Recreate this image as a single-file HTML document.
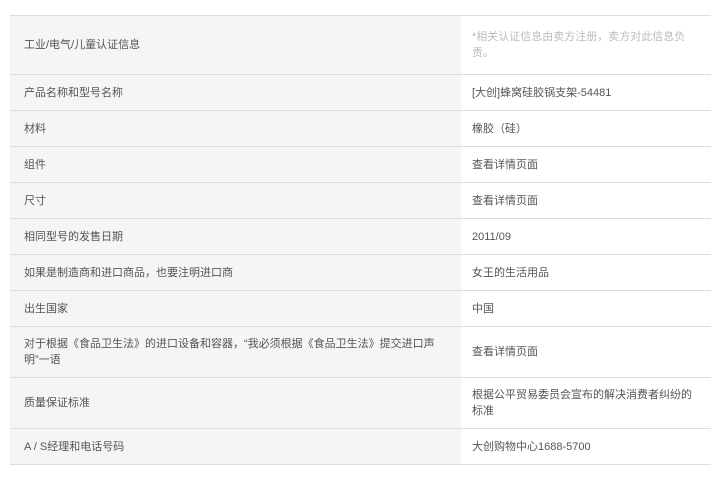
<!DOCTYPE html>
<html><head><meta charset="utf-8"><style>
body{margin:0;background:#fff;width:721px;height:499px;overflow:hidden;font-family:"Liberation Sans","Noto Sans CJK SC",sans-serif;font-size:11px;color:#555;}
table{position:absolute;left:10px;top:15px;width:701px;border-collapse:collapse;}
td{border-top:1px solid #ddd;border-bottom:1px solid #ddd;padding:0 14px;line-height:16px;vertical-align:middle;}
td.l{background:#f5f5f5;width:423px;}
td.r{padding-left:11px;padding-right:8px;}
.g{color:#bbb;}
</style></head><body>
<table>
<tr style="height:59px"><td class="l">工业/电气/儿童认证信息</td><td class="r g" style="padding-right:20px">*相关认证信息由卖方注册，卖方对此信息负责。</td></tr>
<tr style="height:36px"><td class="l">产品名称和型号名称</td><td class="r">[大创]蜂窝硅胶锅支架-54481</td></tr>
<tr style="height:36px"><td class="l">材料</td><td class="r">橡胶（硅）</td></tr>
<tr style="height:36px"><td class="l">组件</td><td class="r">查看详情页面</td></tr>
<tr style="height:36px"><td class="l">尺寸</td><td class="r">查看详情页面</td></tr>
<tr style="height:36px"><td class="l">相同型号的发售日期</td><td class="r">2011/09</td></tr>
<tr style="height:36px"><td class="l">如果是制造商和进口商品，也要注明进口商</td><td class="r">女王的生活用品</td></tr>
<tr style="height:36px"><td class="l">出生国家</td><td class="r">中国</td></tr>
<tr style="height:51px"><td class="l">对于根据《食品卫生法》的进口设备和容器，“我必须根据《食品卫生法》提交进口声明”一语</td><td class="r">查看详情页面</td></tr>
<tr style="height:51px"><td class="l">质量保证标准</td><td class="r">根据公平贸易委员会宣布的解决消费者纠纷的<br>标准</td></tr>
<tr style="height:36px"><td class="l">A / S经理和电话号码</td><td class="r">大创购物中心1688-5700</td></tr>
</table>
</body></html>
